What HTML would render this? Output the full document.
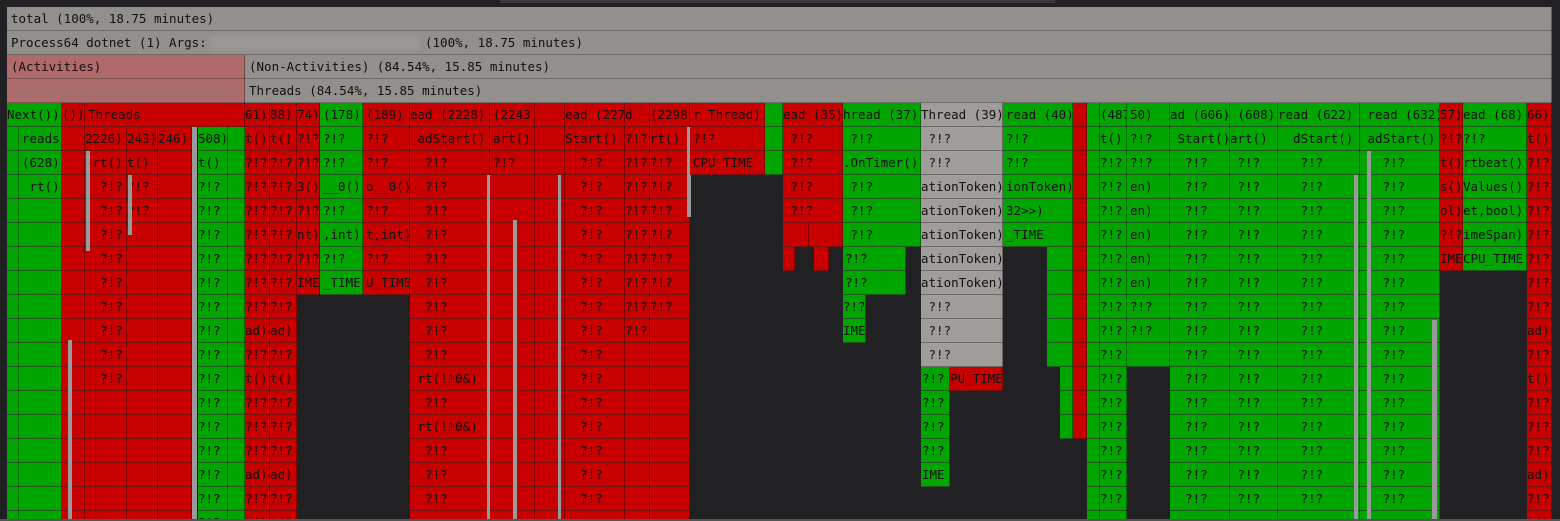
<!DOCTYPE html>
<html><head><meta charset="utf-8"><style>
html,body{margin:0;padding:0;background:#212124;width:1560px;height:521px;overflow:hidden;position:relative}
.c{position:absolute;box-sizing:border-box;overflow:hidden;white-space:nowrap;font:12.5px "DejaVu Sans Mono","Liberation Mono",monospace;line-height:24px;color:#111;padding-left:3px;border-right:1px solid rgba(0,0,0,.35)}
.r{background:repeating-linear-gradient(to bottom,#c80000 0 23px,#7a1010 23px 24px)}
.g{background:repeating-linear-gradient(to bottom,#00a500 0 23px,#1f5a1f 23px 24px)}
.y{background:repeating-linear-gradient(to bottom,#a09c9a 0 23px,#6a6866 23px 24px)}
.h{background:repeating-linear-gradient(to bottom,#928f8c 0 23px,#6e6c6a 23px 24px)}
.p{background:repeating-linear-gradient(to bottom,#b06a6a 0 23px,#7e5252 23px 24px)}
.s{position:absolute;background:#9a9a9a;width:5px}
</style></head><body>
<div style="position:absolute;left:500px;top:0;width:555px;height:3px;background:#3a3a3e"></div>
<div class="c h" style="left:7px;top:7px;width:1545px;height:24px;padding-left:4px">total (100%, 18.75 minutes)</div>
<div class="c h" style="left:7px;top:31px;width:1545px;height:24px;padding-left:4px">Process64 dotnet (1) Args:</div>
<div style="position:absolute;left:210px;top:35px;width:210px;height:16px;background:#9a9794;filter:blur(2px)"></div>
<div class="c" style="left:425px;top:31px;width:300px;height:23px;padding:0;border:0">(100%, 18.75 minutes)</div>
<div class="c p" style="left:7px;top:55px;width:238px;height:48px;padding-left:4px">(Activities)</div>
<div style="position:absolute;left:12px;top:84px;width:225px;height:14px;background:#a86e6e;filter:blur(2px)"></div>
<div class="c h" style="left:245px;top:55px;width:1307px;height:48px;padding-left:4px">(Non-Activities) (84.54%, 15.85 minutes)<br>Threads (84.54%, 15.85 minutes)</div>

<div class="c g" style="left:7px;top:103px;width:55px;height:418px;padding:0">Next())</div>
<div class="c g" style="left:7px;top:127px;width:12px;height:394px"></div>
<div class="c g" style="left:19px;top:127px;width:43px;height:394px">reads<br>(628)<br>&nbsp;rt()<br>&nbsp;&nbsp;?!?</div>
<div class="c g" style="left:30px;top:199px;width:32px;height:322px"></div>
<div class="c r" style="left:62px;top:103px;width:23px;height:418px;padding:0">())</div>
<div class="c r" style="left:85px;top:103px;width:160px;height:24px">Threads</div>
<div class="c r" style="left:85px;top:127px;width:42px;height:394px;padding:0">2226)<br>&nbsp;rt()<br>&nbsp;&nbsp;?!?<br>&nbsp;&nbsp;?!?<br>&nbsp;&nbsp;?!?<br>&nbsp;&nbsp;?!?<br>&nbsp;&nbsp;?!?<br>&nbsp;&nbsp;?!?<br>&nbsp;&nbsp;?!?<br>&nbsp;&nbsp;?!?<br>&nbsp;&nbsp;?!?</div>
<div class="c r" style="left:127px;top:127px;width:31px;height:394px;padding:0">243)<br>t()<br>?!?<br>?!?</div>
<div class="c r" style="left:158px;top:127px;width:34px;height:394px;padding:0">246)</div>
<div class="s" style="left:192px;top:127px;height:394px"></div>
<div class="c g" style="left:198px;top:127px;width:30px;height:394px;padding:0">508)<br>t()<br>?!?<br>?!?<br>?!?<br>?!?<br>?!?<br>?!?<br>?!?<br>?!?<br>?!?<br>?!?<br>?!?<br>?!?<br>?!?<br>?!?<br>?!?</div>
<div class="c g" style="left:228px;top:127px;width:17px;height:394px"></div>
<div class="s" style="left:86px;top:151px;height:100px;width:4px"></div>
<div class="s" style="left:128px;top:175px;height:60px;width:4px"></div>
<div class="s" style="left:68px;top:340px;height:180px;width:4px"></div>
<div class="c r" style="left:245px;top:103px;width:25px;height:418px;padding:0">61)<br>t()<br>?!?<br>?!?<br>?!?<br>?!?<br>?!?<br>?!?<br>?!?<br>ad)<br>?!?<br>t()<br>?!?<br>?!?<br>?!?<br>ad)<br>?!?<br>t()</div>
<div class="c r" style="left:270px;top:103px;width:27px;height:418px;padding:0">88)<br>t()<br>?!?<br>?!?<br>?!?<br>?!?<br>?!?<br>?!?<br>?!?<br>ad)<br>?!?<br>t()<br>?!?<br>?!?<br>?!?<br>ad)<br>?!?<br>t()</div>
<div class="c r" style="left:297px;top:103px;width:23px;height:192px;padding:0">74)<br>?!?<br>?!?<br>3()<br>?!?<br>nt)<br>?!?<br>IME</div>
<div class="c g" style="left:320px;top:103px;width:43px;height:192px">(178)<br>?!?<br>?!?<br>__0()<br>?!?<br>,int)<br>?!?<br>_TIME</div>
<div class="c r" style="left:363px;top:103px;width:47px;height:192px">(189)<br>?!?<br>?!?<br>o__0()<br>?!?<br>t,int)<br>?!?<br>U_TIME</div>
<div class="c r" style="left:410px;top:103px;width:80px;height:418px;padding:0">ead (2228)<br>&nbsp;adStart()<br>&nbsp;&nbsp;?!?<br>&nbsp;&nbsp;?!?<br>&nbsp;&nbsp;?!?<br>&nbsp;&nbsp;?!?<br>&nbsp;&nbsp;?!?<br>&nbsp;&nbsp;?!?<br>&nbsp;&nbsp;?!?<br>&nbsp;&nbsp;?!?<br>&nbsp;&nbsp;?!?<br>&nbsp;rt(!!0&amp;)<br>&nbsp;&nbsp;?!?<br>&nbsp;rt(!!0&amp;)<br>&nbsp;&nbsp;?!?<br>&nbsp;&nbsp;?!?<br>&nbsp;&nbsp;?!?</div>
<div class="s" style="left:487px;top:175px;height:346px;width:5px"></div>
<div class="c r" style="left:490px;top:103px;width:45px;height:418px">(2243<br>art()<br>?!?</div>
<div class="s" style="left:513px;top:220px;height:300px;width:4px"></div>
<div class="c r" style="left:535px;top:103px;width:30px;height:418px"></div>
<div class="c r" style="left:565px;top:103px;width:60px;height:418px;padding:0">ead (2277)<br>Start()<br>&nbsp;&nbsp;?!?<br>&nbsp;&nbsp;?!?<br>&nbsp;&nbsp;?!?<br>&nbsp;&nbsp;?!?<br>&nbsp;&nbsp;?!?<br>&nbsp;&nbsp;?!?<br>&nbsp;&nbsp;?!?<br>&nbsp;&nbsp;?!?<br>&nbsp;&nbsp;?!?<br>&nbsp;&nbsp;?!?<br>&nbsp;&nbsp;?!?<br>&nbsp;&nbsp;?!?<br>&nbsp;&nbsp;?!?<br>&nbsp;&nbsp;?!?<br>&nbsp;&nbsp;?!?</div>
<div class="s" style="left:558px;top:175px;height:346px;width:3px"></div>
<div class="c r" style="left:625px;top:103px;width:25px;height:418px;padding:0">d<br>?!?<br>?!?<br>?!?<br>?!?<br>?!?<br>?!?<br>?!?<br>?!?<br>?!?</div>
<div class="c r" style="left:650px;top:103px;width:40px;height:418px;padding:0">(2298)<br>rt()<br>?!?<br>?!?<br>?!?<br>?!?<br>?!?<br>?!?<br>?!?</div>
<div class="s" style="left:687px;top:127px;height:90px;width:4px"></div>
<div class="c r" style="left:690px;top:103px;width:75px;height:72px">r Thread)<br>?!?<br>CPU_TIME</div>
<div class="c g" style="left:765px;top:103px;width:18px;height:72px"></div>
<div class="c r" style="left:783px;top:103px;width:60px;height:144px;padding:0">ead (35)<br>&nbsp;?!?<br>&nbsp;?!?<br>&nbsp;?!?<br>&nbsp;?!?</div>
<div class="c r" style="left:794px;top:223px;width:15px;height:24px"></div>
<div class="c r" style="left:814px;top:247px;width:15px;height:24px"></div>
<div class="c r" style="left:783px;top:247px;width:12px;height:24px"></div>
<div class="c g" style="left:843px;top:103px;width:78px;height:144px;padding:0">hread (37)<br>&nbsp;?!?<br>.OnTimer()<br>&nbsp;?!?<br>&nbsp;?!?<br>&nbsp;?!?</div>
<div class="c g" style="left:843px;top:247px;width:63px;height:48px;padding-left:2px">?!?<br>?!?</div>
<div class="c g" style="left:843px;top:295px;width:23px;height:48px;padding:0">?!?<br>IME</div>
<div class="c y" style="left:921px;top:103px;width:82px;height:264px;padding:0">Thread (39)<br>&nbsp;?!?<br>&nbsp;?!?<br>ationToken)<br>ationToken)<br>ationToken)<br>ationToken)<br>ationToken)<br>&nbsp;?!?<br>&nbsp;?!?<br>&nbsp;?!?</div>
<div class="c g" style="left:921px;top:367px;width:29px;height:120px;padding-left:1px">?!?<br>?!?<br>?!?<br>?!?<br>IME</div>
<div class="c r" style="left:950px;top:367px;width:53px;height:24px;padding:0">PU_TIME</div>
<div class="c g" style="left:1003px;top:103px;width:70px;height:144px">read (40)<br>?!?<br>?!?<br>ionToken)<br>32&gt;&gt;)<br>_TIME</div>
<div class="c g" style="left:1047px;top:247px;width:26px;height:120px"></div>
<div class="c g" style="left:1060px;top:367px;width:13px;height:72px"></div>
<div class="c r" style="left:1073px;top:103px;width:14px;height:336px"></div>
<div class="c g" style="left:1087px;top:103px;width:13px;height:418px"></div>
<div class="c g" style="left:1100px;top:103px;width:27px;height:418px;padding:0">(487)<br>t()<br>?!?<br>?!?<br>?!?<br>?!?<br>?!?<br>?!?<br>?!?<br>?!?<br>?!?<br>?!?<br>?!?<br>?!?<br>?!?<br>?!?<br>?!?</div>
<div class="c g" style="left:1127px;top:103px;width:43px;height:264px">50)<br>?!?<br>?!?<br>en)<br>en)<br>en)<br>en)<br>en)<br>?!?<br>?!?</div>
<div class="c g" style="left:1170px;top:103px;width:60px;height:418px;padding:0">ad (606)<br>&nbsp;Start()<br>&nbsp;&nbsp;?!?<br>&nbsp;&nbsp;?!?<br>&nbsp;&nbsp;?!?<br>&nbsp;&nbsp;?!?<br>&nbsp;&nbsp;?!?<br>&nbsp;&nbsp;?!?<br>&nbsp;&nbsp;?!?<br>&nbsp;&nbsp;?!?<br>&nbsp;&nbsp;?!?<br>&nbsp;&nbsp;?!?<br>&nbsp;&nbsp;?!?<br>&nbsp;&nbsp;?!?<br>&nbsp;&nbsp;?!?<br>&nbsp;&nbsp;?!?<br>&nbsp;&nbsp;?!?</div>
<div class="c g" style="left:1230px;top:103px;width:48px;height:418px;padding:0">&nbsp;(608)<br>art()<br>&nbsp;?!?<br>&nbsp;?!?<br>&nbsp;?!?<br>&nbsp;?!?<br>&nbsp;?!?<br>&nbsp;?!?<br>&nbsp;?!?<br>&nbsp;?!?<br>&nbsp;?!?<br>&nbsp;?!?<br>&nbsp;?!?<br>&nbsp;?!?<br>&nbsp;?!?<br>&nbsp;?!?<br>&nbsp;?!?</div>
<div class="c g" style="left:1278px;top:103px;width:82px;height:418px;padding:0">read (622)<br>&nbsp;&nbsp;dStart()<br>&nbsp;&nbsp;&nbsp;?!?<br>&nbsp;&nbsp;&nbsp;?!?<br>&nbsp;&nbsp;&nbsp;?!?<br>&nbsp;&nbsp;&nbsp;?!?<br>&nbsp;&nbsp;&nbsp;?!?<br>&nbsp;&nbsp;&nbsp;?!?<br>&nbsp;&nbsp;&nbsp;?!?<br>&nbsp;&nbsp;&nbsp;?!?<br>&nbsp;&nbsp;&nbsp;?!?<br>&nbsp;&nbsp;&nbsp;?!?<br>&nbsp;&nbsp;&nbsp;?!?<br>&nbsp;&nbsp;&nbsp;?!?<br>&nbsp;&nbsp;&nbsp;?!?<br>&nbsp;&nbsp;&nbsp;?!?<br>&nbsp;&nbsp;&nbsp;?!?</div>
<div class="s" style="left:1354px;top:175px;height:346px;width:4px"></div>
<div class="c g" style="left:1360px;top:103px;width:80px;height:418px;padding:0">&nbsp;read (632)<br>&nbsp;adStart()<br>&nbsp;&nbsp;&nbsp;?!?<br>&nbsp;&nbsp;&nbsp;?!?<br>&nbsp;&nbsp;&nbsp;?!?<br>&nbsp;&nbsp;&nbsp;?!?<br>&nbsp;&nbsp;&nbsp;?!?<br>&nbsp;&nbsp;&nbsp;?!?<br>&nbsp;&nbsp;&nbsp;?!?<br>&nbsp;&nbsp;&nbsp;?!?<br>&nbsp;&nbsp;&nbsp;?!?<br>&nbsp;&nbsp;&nbsp;?!?<br>&nbsp;&nbsp;&nbsp;?!?<br>&nbsp;&nbsp;&nbsp;?!?<br>&nbsp;&nbsp;&nbsp;?!?<br>&nbsp;&nbsp;&nbsp;?!?<br>&nbsp;&nbsp;&nbsp;?!?</div>
<div class="s" style="left:1367px;top:151px;height:370px;width:4px"></div>
<div class="s" style="left:1432px;top:320px;height:200px;width:5px"></div>
<div class="c r" style="left:1440px;top:103px;width:23px;height:168px;padding:0">57)<br>?!?<br>t()<br>s()<br>ol)<br>?!?<br>IME</div>
<div class="c g" style="left:1463px;top:103px;width:64px;height:168px;padding:0">ead (68)<br>?!?<br>rtbeat()<br>Values()<br>et,bool)<br>imeSpan)<br>CPU_TIME</div>
<div class="c r" style="left:1527px;top:103px;width:25px;height:418px;padding:0">66)<br>t()<br>?!?<br>?!?<br>?!?<br>?!?<br>?!?<br>?!?<br>?!?<br>ad)<br>?!?<br>t()<br>?!?<br>?!?<br>?!?<br>ad)<br>?!?<br>t()</div>
<div style="position:absolute;left:0;top:519px;width:1560px;height:2px;background:#555"></div>
</body></html>
